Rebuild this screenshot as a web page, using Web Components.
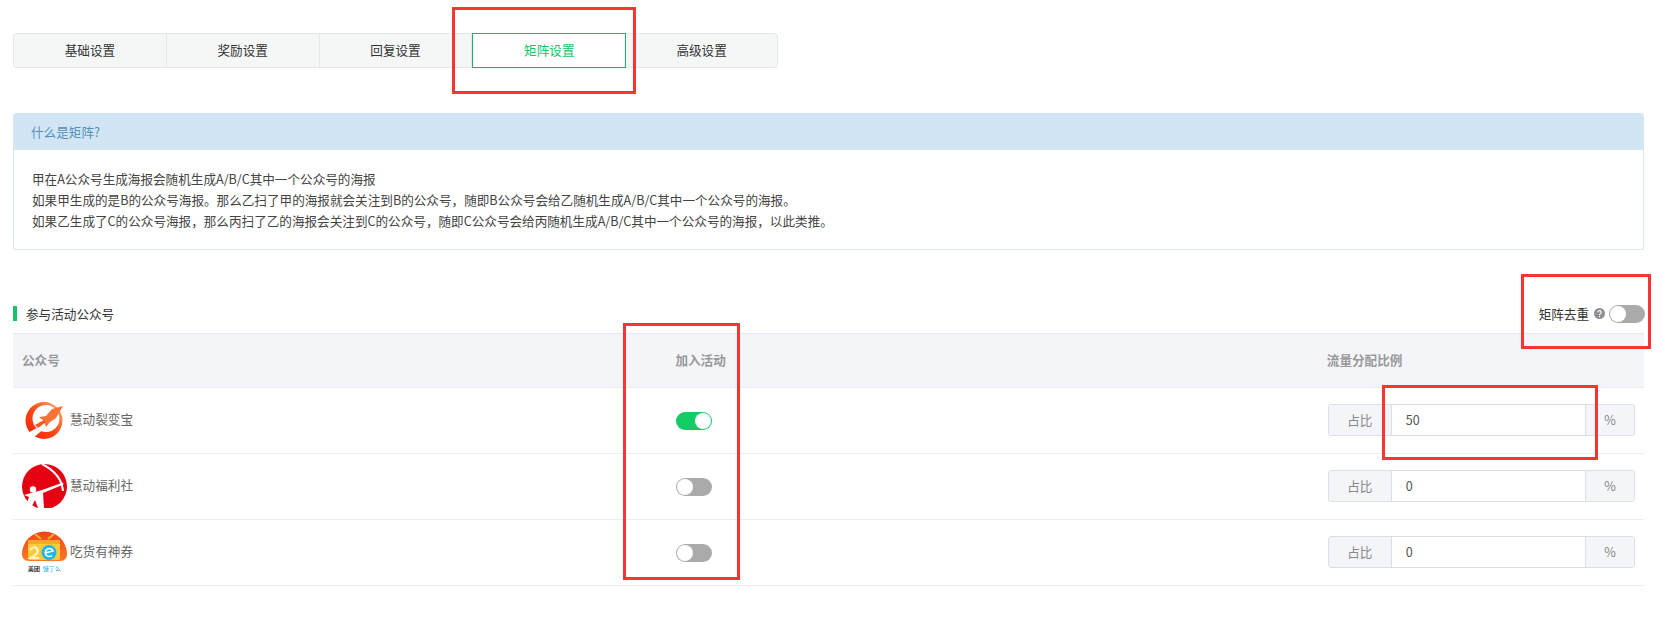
<!DOCTYPE html>
<html lang="zh">
<head>
<meta charset="utf-8">
<title>矩阵设置</title>
<style>
  html, body { margin: 0; background: #fff; }
  body { font: 12.6px/1.5 "Noto Sans CJK SC", "Liberation Sans", sans-serif; color: #333; }
</style>
</head>
<body>
<settings-page>
  <tab-bar>
    <tab-item>基础设置</tab-item>
    <tab-item>奖励设置</tab-item>
    <tab-item>回复设置</tab-item>
    <tab-item active>矩阵设置</tab-item>
    <tab-item>高级设置</tab-item>
  </tab-bar>
  <info-panel heading="什么是矩阵?">
    甲在A公众号生成海报会随机生成A/B/C其中一个公众号的海报<br>
    如果甲生成的是B的公众号海报。那么乙扫了甲的海报就会关注到B的公众号，随即B公众号会给乙随机生成A/B/C其中一个公众号的海报。<br>
    如果乙生成了C的公众号海报，那么丙扫了乙的海报会关注到C的公众号，随即C公众号会给丙随机生成A/B/C其中一个公众号的海报，以此类推。
  </info-panel>
  <section-head heading="参与活动公众号"></section-head>
  <account-table>
    <account-row name="慧动裂变宝" logo="rocket" value="50" on></account-row>
    <account-row name="慧动福利社" logo="archer" value="0"></account-row>
    <account-row name="吃货有神券" logo="coupon" value="0"></account-row>
  </account-table>
  <red-mark style="left:452px;top:7px;width:184px;height:87px"></red-mark>
  <red-mark style="left:1521px;top:274px;width:130px;height:75px"></red-mark>
  <red-mark style="left:623px;top:323px;width:117px;height:257px"></red-mark>
  <red-mark style="left:1382px;top:385px;width:216px;height:75px"></red-mark>
</settings-page>

<script>
'use strict';

class SettingsPage extends HTMLElement {
  constructor() {
    super();
    this.attachShadow({mode: 'open'}).innerHTML = `
    <style>
      :host { display: block; position: relative; height: 625px; box-sizing: border-box; padding: 33px 20px 0 13px; overflow: hidden; }
    </style>
    <slot></slot>`;
  }
}

class TabBar extends HTMLElement {
  constructor() {
    super();
    this.attachShadow({mode: 'open'}).innerHTML = `
    <style>
      :host {
        display: flex;
        width: 765px;
        height: 35px;
        box-sizing: border-box;
        background: #f5f7f7;
        border: 1px solid #e6e9e9;
        border-radius: 3px;
        margin-bottom: 45px;
      }
    </style>
    <slot></slot>`;
  }
}

class TabItem extends HTMLElement {
  constructor() {
    super();
    this.attachShadow({mode: 'open'}).innerHTML = `
    <style>
      :host {
        display: flex;
        align-items: center;
        justify-content: center;
        box-sizing: border-box;
        width: 153px;
        margin: -1px 0;
        border-right: 1px solid #e6e9e9;
        color: #333;
      }
      :host(:last-child) { border-right: none; width: 151px; }
      :host([active]) {
        width: 154px;
        background: #fff;
        color: #14c466;
        border: 1px solid #1ab368;
      }
    </style>
    <slot></slot>`;
  }
}

class InfoPanel extends HTMLElement {
  constructor() {
    super();
    this.attachShadow({mode: 'open'}).innerHTML = `
    <style>
      :host {
        display: block;
        height: 137px;
        box-sizing: border-box;
        border: 1px solid #d5e8ec;
        border-top: none;
        border-radius: 3px;
        margin-bottom: 56px;
        overflow: hidden;
      }
      header {
        height: 37px;
        line-height: 37px;
        padding-left: 18px;
        margin: 0 -1px;
        background: #d2e5f5;
        color: #5490b8;
      }
      div { padding: 18px 18px 0; line-height: 21px; color: #444; }
    </style>
    <header></header>
    <div><slot></slot></div>`;
    this.shadowRoot.querySelector('header').textContent = this.getAttribute('heading');
  }
}

class SectionHead extends HTMLElement {
  constructor() {
    super();
    this.attachShadow({mode: 'open'}).innerHTML = `
    <style>
      :host { display: flex; align-items: center; height: 27px; }
      .title { flex: 1; display: flex; align-items: center; margin-top: -11px; color: #333; }
      .title::before { content: ""; width: 4px; height: 15px; background: #14c466; margin-right: 9px; }
      .right { display: flex; align-items: center; margin-top: -11px; margin-right: -1px; color: #333; }
      svg { margin: 0 4px 0 5px; }
    </style>
    <div class="title"></div>
    <div class="right">
      <span>矩阵去重</span>
      <svg width="11" height="11" viewBox="0 0 11 11">
        <circle cx="5.5" cy="5.5" r="5.5" fill="#8f8f8f"/>
        <path d="M3.8 4.3a1.7 1.6 0 1 1 2.6 1.3c-.6.4-.9.6-.9 1.3" fill="none" stroke="#fff" stroke-width="1.1"/>
        <circle cx="5.5" cy="8.5" r=".7" fill="#fff"/>
      </svg>
      <switch-toggle></switch-toggle>
    </div>`;
    this.shadowRoot.querySelector('.title').textContent = this.getAttribute('heading');
  }
}

class SwitchToggle extends HTMLElement {
  constructor() {
    super();
    this.attachShadow({mode: 'open'}).innerHTML = `
    <style>
      :host {
        display: inline-block;
        position: relative;
        width: 36px;
        height: 18px;
        box-sizing: border-box;
        border-radius: 9px;
        background: #aaa;
      }
      :host([on]) { background: #14cc66; }
      i {
        position: absolute;
        left: 1px;
        top: 1px;
        width: 16px;
        height: 16px;
        border-radius: 50%;
        background: #fff;
      }
      :host([on]) i { left: 19px; }
    </style>
    <i></i>`;
  }
}

class AccountTable extends HTMLElement {
  constructor() {
    super();
    this.attachShadow({mode: 'open'}).innerHTML = `
    <style>
      :host { display: block; }
      .head {
        display: grid;
        grid-template-columns: 2fr 2fr 1fr;
        align-items: center;
        height: 55px;
        box-sizing: border-box;
        background: #f3f5f9;
        border-top: 1px solid #e6e9f0;
        border-bottom: 1px solid #e9ecf2;
        color: #999;
        font-weight: 700;
      }
      .head span { padding-left: 9px; }
      .head span:nth-child(2) { padding-left: 10px; }
    </style>
    <div class="head"><span>公众号</span><span>加入活动</span><span>流量分配比例</span></div>
    <slot></slot>`;
  }
}

class AccountRow extends HTMLElement {
  constructor() {
    super();
    this.attachShadow({mode: 'open'}).innerHTML = `
    <style>
      :host {
        display: grid;
        grid-template-columns: 2fr 2fr 1fr;
        align-items: center;
        height: 66px;
        box-sizing: border-box;
        border-bottom: 1px solid #ebedf2;
      }
      .name { display: flex; align-items: center; padding-left: 9px; color: #666; }
      .name span { margin: 0 0 2px 3px; }
      .join { padding-left: 11px; display: flex; }
      .ratio { padding: 0 9px 2px 10px; }
    </style>
    <div class="name"><brand-logo></brand-logo><span></span></div>
    <div class="join"><switch-toggle></switch-toggle></div>
    <div class="ratio"><ratio-input></ratio-input></div>`;
    const root = this.shadowRoot;
    root.querySelector('.name span').textContent = this.getAttribute('name');
    root.querySelector('brand-logo').setAttribute('kind', this.getAttribute('logo'));
    root.querySelector('ratio-input').setAttribute('value', this.getAttribute('value'));
    if (this.hasAttribute('on')) root.querySelector('switch-toggle').setAttribute('on', '');
  }
}

class RatioInput extends HTMLElement {
  constructor() {
    super();
    this.attachShadow({mode: 'open'}).innerHTML = `
    <style>
      :host {
        display: flex;
        height: 32px;
        box-sizing: border-box;
        border: 1px solid #dcdfe8;
        border-radius: 3px;
        overflow: hidden;
        color: #888;
        line-height: 30px;
      }
      .pre, .post { background: #f3f5f9; text-align: center; }
      .pre { width: 62px; border-right: 1px solid #dcdfe8; }
      .post { width: 48px; border-left: 1px solid #dcdfe8; }
      .val { flex: 1; padding-left: 14px; color: #555; }
    </style>
    <span class="pre">占比</span>
    <span class="val"></span>
    <span class="post">%</span>`;
    this.shadowRoot.querySelector('.val').textContent = this.getAttribute('value');
  }
}

const LOGOS = {
  rocket: `
    <svg width="45" height="45" viewBox="0 0 45 45">
      <defs>
        <linearGradient id="r" x1="0" y1="1" x2="1" y2="0">
          <stop offset="0" stop-color="#f41c0c"/>
          <stop offset=".5" stop-color="#fa4a16"/>
          <stop offset=".8" stop-color="#fb8a4c"/>
          <stop offset="1" stop-color="#fcd2ac"/>
        </linearGradient>
      </defs>
      <path fill-rule="evenodd" fill="url(#r)" d="M22 4a18.5 18.5 0 1 0 0 37a18.5 18.5 0 1 0 0-37ZM24 7a13.5 13.5 0 1 1 0 27a13.5 13.5 0 1 1 0-27Z"/>
      <path d="M4 36 22 26 24 29 10 41Z" fill="#fff"/>
      <path d="M41 8 30 11 24 18 17 19 22 23 24 29 28 24 34 20Z" fill="#fb7236"/>
      <path d="M13 27 22 22 24 24 16 30Z" fill="#f8551c"/>
    </svg>`,
  archer: `
    <svg width="45" height="45" viewBox="0 0 45 45">
      <defs><clipPath id="a"><rect width="45" height="44"/></clipPath></defs>
      <g clip-path="url(#a)">
        <circle cx="22.5" cy="22.5" r="22.5" fill="#e50012"/>
        <path d="M20 0C32 6 40 15 41 27" fill="none" stroke="#fff" stroke-width="2"/>
        <path d="M2 31 20 26 41 18.5 41.5 20.5 21 29 22 44 16 44 13 36 9 44 3 44 7 33Z" fill="#fff"/>
        <circle cx="11" cy="25.5" r="3.2" fill="#fff"/>
      </g>
    </svg>`,
  coupon: `
    <svg width="45" height="45" viewBox="0 0 45 45">
      <defs>
        <linearGradient id="d" x1="0" y1="0" x2="0" y2="1">
          <stop offset="0" stop-color="#f0441c"/>
          <stop offset="1" stop-color="#fb7a24"/>
        </linearGradient>
      </defs>
      <path d="M0 24A22.5 22.5 0 0 1 45 24Q45 31 38 31H7Q0 31 0 24Z" fill="url(#d)"/>
      <path d="M13 4 19 9M32 4 26 9" stroke="#f9b02c" stroke-width="2"/>
      <rect x="6" y="10" width="32" height="20" rx="2" fill="#fbcb3a"/>
      <rect x="6" y="10" width="32" height="4" fill="#f7a828"/>
      <path d="M8 20Q12 15 15 19T9 28H17" fill="none" stroke="#fff3cc" stroke-width="2.2"/>
      <circle cx="27" cy="22.5" r="7.5" fill="#1db8e6"/>
      <path d="M23 23 31 21A4 4 0 1 0 30 25.5" fill="none" stroke="#fff" stroke-width="1.6"/>
      <text x="6" y="41" font-size="6" fill="#333" font-weight="700">美团</text>
      <text x="21" y="41" font-size="6" fill="#28a6e8">饿了么</text>
    </svg>`
};

class BrandLogo extends HTMLElement {
  static get observedAttributes() {
    return ['kind'];
  }
  constructor() {
    super();
    this.attachShadow({mode: 'open'});
  }
  attributeChangedCallback(name, oldValue, newValue) {
    this.shadowRoot.innerHTML = `
    <style>
      :host { display: block; width: 45px; height: 45px; }
      svg { display: block; filter: blur(.4px); }
    </style>` + LOGOS[newValue];
  }
}

class RedMark extends HTMLElement {
  constructor() {
    super();
    this.attachShadow({mode: 'open'}).innerHTML = `
    <style>
      :host { display: block; position: absolute; box-sizing: border-box; border: 3px solid #fa3333; pointer-events: none; }
    </style>`;
  }
}

customElements.define('settings-page', SettingsPage);
customElements.define('tab-bar', TabBar);
customElements.define('tab-item', TabItem);
customElements.define('info-panel', InfoPanel);
customElements.define('section-head', SectionHead);
customElements.define('switch-toggle', SwitchToggle);
customElements.define('account-table', AccountTable);
customElements.define('account-row', AccountRow);
customElements.define('ratio-input', RatioInput);
customElements.define('brand-logo', BrandLogo);
customElements.define('red-mark', RedMark);
</script>
</body>
</html>
